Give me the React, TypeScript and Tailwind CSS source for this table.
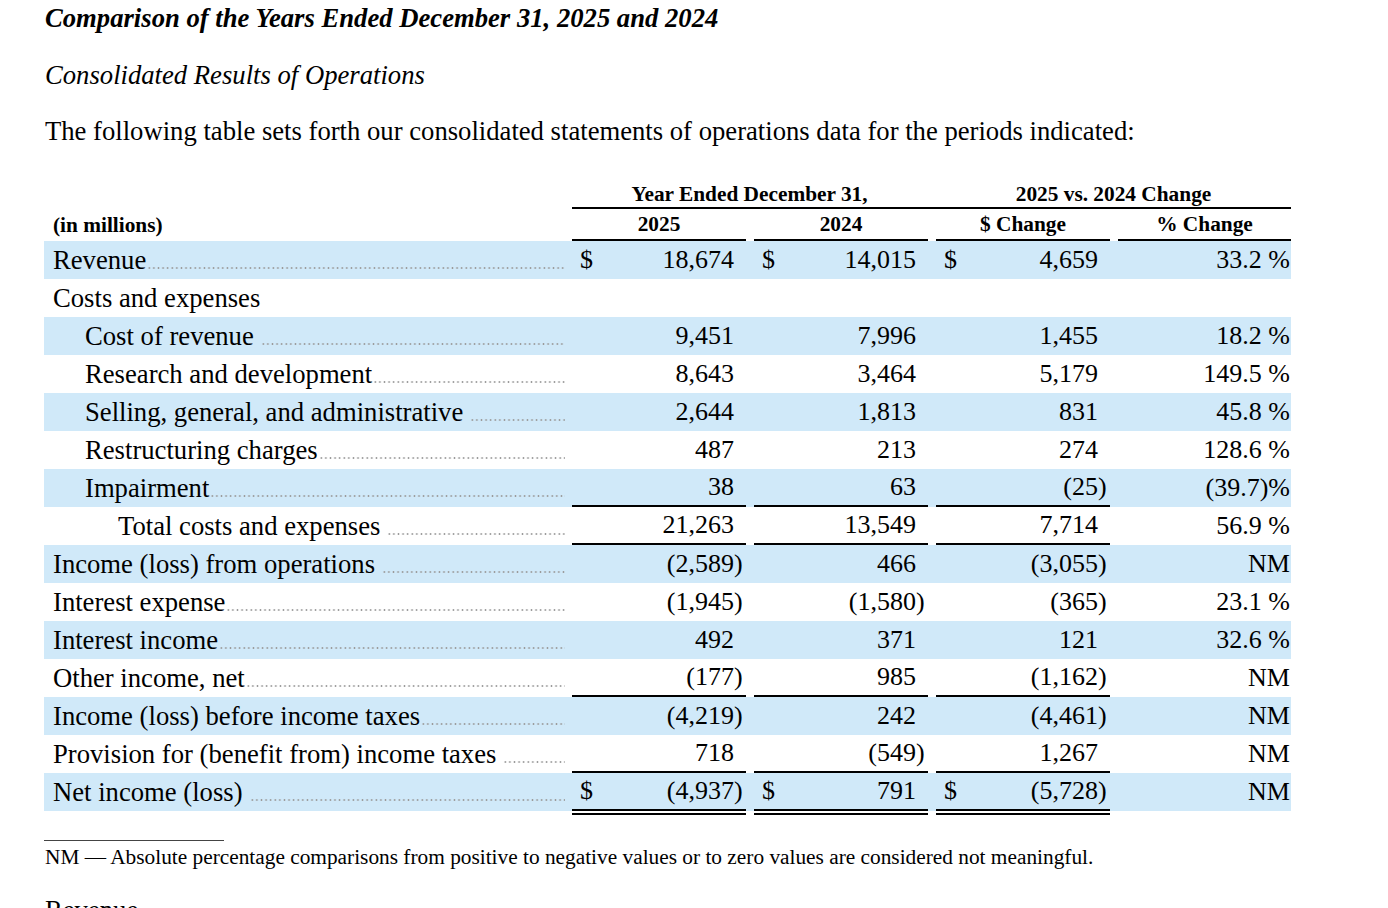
type Row = {
  label: string;
  indent: number;
  values?: string[];
  pct?: string;
  dollar?: boolean;
  rule?: 'single' | 'double';
  space?: boolean;
};

const rows: Row[] = [
  { label: 'Revenue', indent: 0, dollar: true, values: ['18,674', '14,015', '4,659'], pct: '33.2 %' },
  { label: 'Costs and expenses', indent: 0 },
  { label: 'Cost of revenue', indent: 1, values: ['9,451', '7,996', '1,455'], pct: '18.2 %', space: true },
  { label: 'Research and development', indent: 1, values: ['8,643', '3,464', '5,179'], pct: '149.5 %' },
  { label: 'Selling, general, and administrative', indent: 1, values: ['2,644', '1,813', '831'], pct: '45.8 %', space: true },
  { label: 'Restructuring charges', indent: 1, values: ['487', '213', '274'], pct: '128.6 %' },
  { label: 'Impairment', indent: 1, values: ['38', '63', '(25)'], pct: '(39.7)%', rule: 'single' },
  { label: 'Total costs and expenses', indent: 2, values: ['21,263', '13,549', '7,714'], pct: '56.9 %', rule: 'single', space: true },
  { label: 'Income (loss) from operations', indent: 0, values: ['(2,589)', '466', '(3,055)'], pct: 'NM', space: true },
  { label: 'Interest expense', indent: 0, values: ['(1,945)', '(1,580)', '(365)'], pct: '23.1 %' },
  { label: 'Interest income', indent: 0, values: ['492', '371', '121'], pct: '32.6 %' },
  { label: 'Other income, net', indent: 0, values: ['(177)', '985', '(1,162)'], pct: 'NM', rule: 'single' },
  { label: 'Income (loss) before income taxes', indent: 0, values: ['(4,219)', '242', '(4,461)'], pct: 'NM' },
  { label: 'Provision for (benefit from) income taxes', indent: 0, values: ['718', '(549)', '1,267'], pct: 'NM', rule: 'single', space: true },
  { label: 'Net income (loss)', indent: 0, dollar: true, values: ['(4,937)', '791', '(5,728)'], pct: 'NM', rule: 'double', space: true },
];

const indentClass = ['pl-[9px]', 'pl-[41px]', 'pl-[74px]'];

function Amount({ value, dollar, rule }: { value: string; dollar?: boolean; rule?: Row['rule'] }) {
  const negative = value.startsWith('(');
  const body = negative ? value.slice(0, -1) : value;
  return (
    <div className="w-[182px] h-full pr-[8px]">
      <div className={`h-full flex items-center ${rule ? 'border-b-2 border-black' : ''}`}>
        {dollar && <span className="pl-[8px]">$</span>}
        <span className="flex-1 text-right">{body}</span>
        <span className="w-[12px] text-left">{negative ? ')' : ''}</span>
      </div>
    </div>
  );
}

function TableRow({ row, shaded }: { row: Row; shaded: boolean }) {
  return (
    <div className={`flex h-[38px] text-[26px] leading-[30px] ${shaded ? 'bg-[#d0e9f9]' : ''}`}>
      <div className={`w-[528px] h-full flex items-center pr-[7px] ${indentClass[row.indent]}`}>
        <span className="whitespace-nowrap text-[26.67px]">{row.label}</span>
        {/* dot leader */}
        {row.values && (
          <div
            className={`flex-1 h-[2px] self-end mb-[10px] bg-[radial-gradient(circle,#9a9a9a_0.9px,transparent_1.1px)] bg-[length:4.6px_2px] bg-repeat-x ${
              row.space ? 'ml-[7px]' : 'ml-[1px]'
            }`}
          />
        )}
      </div>
      {row.values ? (
        <>
          {row.values.map((v, i) => (
            <Amount key={i} value={v} dollar={row.dollar} rule={row.rule} />
          ))}
          <div className="w-[173px] h-full flex items-center justify-end pr-[1px]">{row.pct}</div>
        </>
      ) : null}
    </div>
  );
}

export default function App() {
  return (
    <div className="min-h-screen bg-white text-black font-['Liberation_Serif','Times_New_Roman',serif] pl-[44px] pt-[3px]">
      <h1 className="pl-[1px] text-[26.67px] leading-[30px] font-bold italic">
        Comparison of the Years Ended December 31, 2025 and 2024
      </h1>
      <h2 className="pl-[1px] mt-[27px] text-[26.67px] leading-[30px] italic">Consolidated Results of Operations</h2>
      <p className="pl-[1px] mt-[26px] text-[26.67px] leading-[30px]">
        The following table sets forth our consolidated statements of operations data for the periods indicated:
      </p>

      <div className="mt-[35px] w-[1247px]">
        {/* Header groups */}
        <div className="flex h-[28px] text-[21.33px] leading-[24px] font-bold">
          <div className="w-[528px]" />
          <div className="w-[719px] flex items-center border-b-2 border-black">
            <div className="w-[355px] text-center">Year Ended December 31,</div>
            <div className="w-[9px]" />
            <div className="w-[355px] text-center">2025 vs. 2024 Change</div>
          </div>
        </div>
        <div className="flex h-[32px] text-[21.33px] leading-[24px] font-bold">
          <div className="w-[528px] pl-[9px] flex items-center">(in millions)</div>
          {['2025', '2024', '$ Change'].map((h) => (
            <div key={h} className="w-[182px] pr-[8px]">
              <div className="h-full flex items-center justify-center border-b-2 border-black">{h}</div>
            </div>
          ))}
          <div className="w-[173px]">
            <div className="h-full flex items-center justify-center border-b-2 border-black">% Change</div>
          </div>
        </div>

        {rows.map((row, i) => (
          <TableRow key={row.label} row={row} shaded={i % 2 === 0} />
        ))}

        {/* second line of the double rule */}
        <div className="flex h-[4px]">
          <div className="w-[528px]" />
          {[0, 1, 2].map((i) => (
            <div key={i} className="w-[182px] pr-[8px]">
              <div className="h-full border-b-2 border-black" />
            </div>
          ))}
        </div>
      </div>

      <div className="mt-[25px] w-[180px] h-px bg-[#444]" />
      <p className="pl-[1px] mt-[4px] text-[21.33px] leading-[24px]">
        NM — Absolute percentage comparisons from positive to negative values or to zero values are considered not
        meaningful.
      </p>
      <p className="pl-[1px] mt-[26px] text-[26.67px] leading-[30px]">Revenue</p>
    </div>
  );
}
